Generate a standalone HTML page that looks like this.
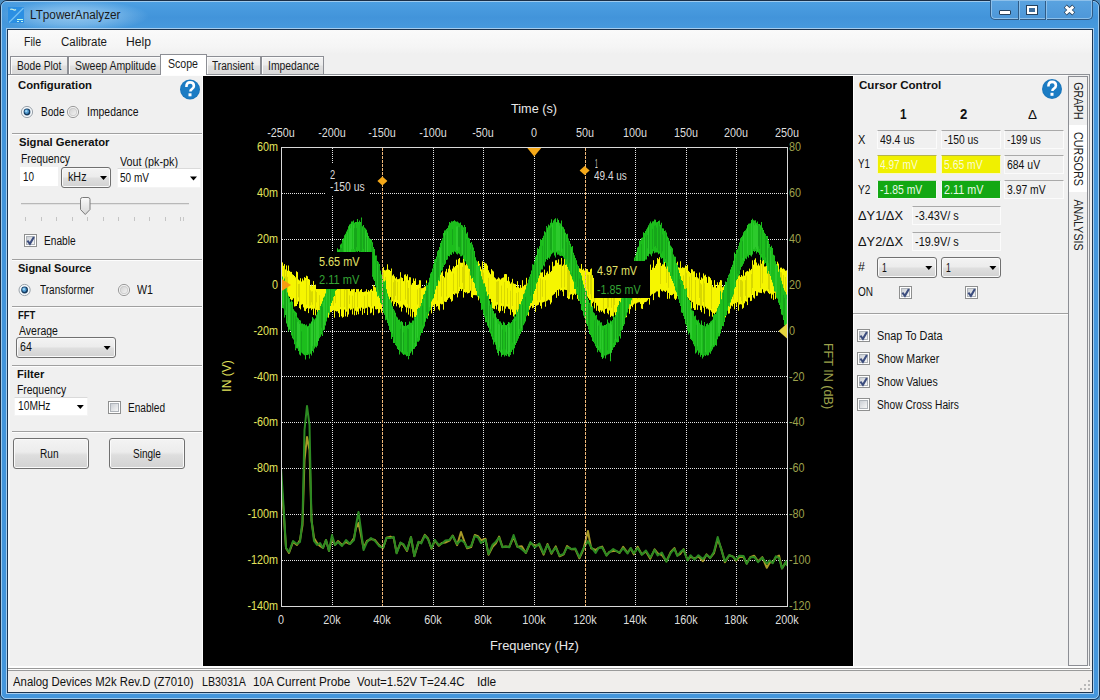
<!DOCTYPE html>
<html><head><meta charset="utf-8"><title>LTpowerAnalyzer</title><style>
*{margin:0;padding:0;box-sizing:border-box}
html,body{width:1100px;height:700px;overflow:hidden}
body{position:relative;background:#fff;font-family:"Liberation Sans",sans-serif;font-size:11px;color:#000}
.t{position:absolute;white-space:nowrap}
.r{position:absolute}
svg{position:absolute;left:0;top:0}
</style></head><body>
<div class="r" style="left:0px;top:0px;width:1100px;height:700px;background:#4a8cc0;"></div>
<div class="r" style="left:0px;top:0px;width:1100px;height:700px;background:#4496dc;border:1px solid #1a2f48;border-radius:7px 7px 6px 6px;"></div>
<div class="r" style="left:1px;top:1px;width:1098px;height:698px;border:1px solid #9fcbee;border-radius:6px 6px 5px 5px;"></div>
<div class="r" style="left:2px;top:2px;width:1096px;height:26px;background:linear-gradient(#4c9fe2,#4294da 60%,#4699dd);border-radius:5px 5px 0 0;"></div>
<div class="r" style="left:2px;top:2px;width:150px;height:26px;border-radius:5px 0 0 0;background:radial-gradient(ellipse 75px 16px at 72px 14px,rgba(200,232,252,0.6),rgba(200,232,252,0.35) 55%,rgba(200,232,252,0));"></div>
<div class="r" style="left:6px;top:28px;width:1088px;height:666px;border:1px solid #a6cdee;"></div>
<div class="r" style="left:7px;top:29px;width:1086px;height:664px;border:1px solid #1d3550;"></div>
<div class="r" style="left:8px;top:30px;width:1084px;height:662px;background:#f0f0f0;"></div>
<svg width="1100" height="30" style="left:0;top:0">
<rect x="8" y="7" width="16" height="16" fill="#2b8fe3"/>
<line x1="9" y1="22.5" x2="23.5" y2="8" stroke="#78c2f4" stroke-width="1.2"/>
<path d="M10.2 9.6 q1.4 -1.1 2.9 0 t2.9 0" stroke="#c8f0e0" fill="none" stroke-width="1.3"/>
<rect x="17" y="19" width="6" height="1" fill="#c0ffe0" shape-rendering="crispEdges"/>
<rect x="17" y="21" width="2" height="1" fill="#c0f8f0" shape-rendering="crispEdges"/>
<rect x="21" y="21" width="2" height="1" fill="#c0f8f0" shape-rendering="crispEdges"/>
</svg>
<div class="t" style="left:29.50px;top:9.0px;font-size:12px;line-height:12px;color:#1a1a1a;transform-origin:0 0;transform:scaleX(0.9785);">LTpowerAnalyzer</div>
<div class="r" style="left:990px;top:0px;width:103px;height:20px;border:1px solid #2f5b86;border-top:none;border-radius:0 0 5px 5px;background:linear-gradient(#5aa3e0,#4d97d8);box-shadow:inset 0 0 0 1px #8dc0ea;"></div>
<div class="r" style="left:1018px;top:1px;width:1px;height:19px;background:#2f5b86;"></div>
<div class="r" style="left:1019px;top:1px;width:1px;height:19px;background:#8dc0ea;"></div>
<div class="r" style="left:1045px;top:1px;width:1px;height:19px;background:#2f5b86;"></div>
<div class="r" style="left:1046px;top:1px;width:1px;height:19px;background:#8dc0ea;"></div>
<div class="r" style="left:999px;top:10px;width:12px;height:5px;background:#fff;border:1px solid #27425e;border-radius:1px;"></div>
<div class="r" style="left:1026px;top:5px;width:12px;height:10px;background:#3f6a90;border:1px solid #27425e;box-shadow:inset 0 0 0 2px #fff;"></div>
<div class="r" style="left:1029px;top:8px;width:6px;height:4px;background:#3d6d9c;"></div>
<svg width="1100" height="30" style="left:0;top:0">
<path d="M1065.3 6.2 L1073.7 13.8 M1073.7 6.2 L1065.3 13.8" stroke="#2a4460" stroke-width="4.4" stroke-linecap="butt"/>
<path d="M1065.7 6.6 L1073.3 13.4 M1073.3 6.6 L1065.7 13.4" stroke="#ffffff" stroke-width="2.8" stroke-linecap="butt"/>
</svg>
<div class="r" style="left:8px;top:30px;width:1084px;height:24px;background:linear-gradient(#fafafa,#f5f5f5 70%,#f0f0f0);"></div>
<div class="t" style="left:24.00px;top:36.0px;font-size:12px;line-height:12px;color:#1a1a1a;transform-origin:0 0;transform:scaleX(0.8794);">File</div>
<div class="t" style="left:61.00px;top:36.0px;font-size:12px;line-height:12px;color:#1a1a1a;transform-origin:0 0;transform:scaleX(0.9579);">Calibrate</div>
<div class="t" style="left:126.00px;top:36.0px;font-size:12px;line-height:12px;color:#1a1a1a;transform-origin:0 0;transform:scaleX(1.0128);">Help</div>
<div class="r" style="left:8px;top:74px;width:1082px;height:1px;background:#8e9196;"></div>
<div class="r" style="left:10px;top:56px;width:58px;height:18px;background:linear-gradient(#f3f3f3,#ececec 45%,#e0e0e0 55%,#d8d8d8);border:1px solid #8c8e94;border-bottom:none;box-shadow:inset 1px 1px 0 #fbfbfb;"></div>
<div class="t" style="left:16.70px;top:60.0px;font-size:12px;line-height:12px;color:#1a1a1a;transform-origin:0 0;transform:scaleX(0.8533);">Bode Plot</div>
<div class="r" style="left:68px;top:56px;width:94px;height:18px;background:linear-gradient(#f3f3f3,#ececec 45%,#e0e0e0 55%,#d8d8d8);border:1px solid #8c8e94;border-bottom:none;box-shadow:inset 1px 1px 0 #fbfbfb;"></div>
<div class="t" style="left:74.50px;top:60.0px;font-size:12px;line-height:12px;color:#1a1a1a;transform-origin:0 0;transform:scaleX(0.8736);">Sweep Amplitude</div>
<div class="r" style="left:206px;top:56px;width:55px;height:18px;background:linear-gradient(#f3f3f3,#ececec 45%,#e0e0e0 55%,#d8d8d8);border:1px solid #8c8e94;border-bottom:none;box-shadow:inset 1px 1px 0 #fbfbfb;"></div>
<div class="t" style="left:212.20px;top:60.0px;font-size:12px;line-height:12px;color:#1a1a1a;transform-origin:0 0;transform:scaleX(0.8432);">Transient</div>
<div class="r" style="left:261px;top:56px;width:63px;height:18px;background:linear-gradient(#f3f3f3,#ececec 45%,#e0e0e0 55%,#d8d8d8);border:1px solid #8c8e94;border-bottom:none;box-shadow:inset 1px 1px 0 #fbfbfb;"></div>
<div class="t" style="left:267.50px;top:60.0px;font-size:12px;line-height:12px;color:#1a1a1a;transform-origin:0 0;transform:scaleX(0.8657);">Impedance</div>
<div class="r" style="left:160px;top:54px;width:47px;height:21px;background:#fff;border:1px solid #8c8e94;border-bottom:none;"></div>
<div class="t" style="left:168.20px;top:58.0px;font-size:12px;line-height:12px;color:#1a1a1a;transform-origin:0 0;transform:scaleX(0.8818);">Scope</div>
<div class="r" style="left:8px;top:75px;width:195px;height:592px;background:#f0f0f0;border-left:2px solid #fafafa;border-top:1px solid #fdfdfd;"></div>
<div class="r" style="left:202px;top:75px;width:1px;height:592px;background:#fcfcfc;"></div>
<div class="t" style="left:17.50px;top:80.0px;font-size:11.5px;line-height:11.5px;color:#111;transform-origin:0 0;transform:scaleX(0.9818);font-weight:bold;">Configuration</div>
<svg width="1100" height="700" style="left:0;top:0;pointer-events:none">
<circle cx="190" cy="89.5" r="10" fill="#1a76bb"/>
<circle cx="190" cy="89.5" r="9" fill="#1b7cc4"/>
<path d="M186.4 87.0 q0 -4.6 3.7 -4.6 q3.8 0 3.8 3.6 q0 2 -2 3.1 q-1.5 .9 -1.5 2.4" stroke="#fff" stroke-width="2.6" fill="none"/>
<rect x="188.5" y="93.3" width="3" height="3" fill="#fff"/>
</svg>
<svg width="1100" height="700" style="left:0;top:0">
<circle cx="27" cy="112" r="5.6" fill="#f4f8fb" stroke="#9aa2aa" stroke-width="1"/>
<circle cx="27" cy="112" r="3.4" fill="#163a5e"/>
<circle cx="26.7" cy="111.6" r="2.3" fill="#4f9ad0"/>
<circle cx="26.3" cy="111.1" r="1.2" fill="#9fd4f4"/>
</svg>
<div class="t" style="left:40.50px;top:106.0px;font-size:12px;line-height:12px;color:#111;transform-origin:0 0;transform:scaleX(0.8387);">Bode</div>
<svg width="1100" height="700" style="left:0;top:0">
<circle cx="73" cy="112" r="5.6" fill="#f6f6f6" stroke="#9a9a9a" stroke-width="1"/>
<circle cx="73" cy="112" r="3.8" fill="url(#rg0)" stroke="#c4c4c4" stroke-width="0.8"/>
<defs><linearGradient id="rg0" x1="0" y1="0" x2="1" y2="1"><stop offset="0" stop-color="#cfcfcf"/><stop offset="1" stop-color="#f6f6f6"/></linearGradient></defs>
</svg>
<div class="t" style="left:86.50px;top:106.0px;font-size:12px;line-height:12px;color:#111;transform-origin:0 0;transform:scaleX(0.8674);">Impedance</div>
<div class="r" style="left:12px;top:133px;width:190px;height:1px;background:#a0a0a0;"></div>
<div class="r" style="left:12px;top:134px;width:190px;height:1px;background:#fdfdfd;"></div>
<div class="t" style="left:18.50px;top:137.0px;font-size:11.5px;line-height:11.5px;color:#111;transform-origin:0 0;transform:scaleX(0.9766);font-weight:bold;">Signal Generator</div>
<div class="t" style="left:20.50px;top:153.0px;font-size:12px;line-height:12px;color:#111;transform-origin:0 0;transform:scaleX(0.8642);">Frequency</div>
<div class="r" style="left:20px;top:167px;width:38px;height:19px;background:#fff;"></div>
<div class="t" style="left:23.00px;top:171.0px;font-size:12px;line-height:12px;color:#111;transform-origin:0 0;transform:scaleX(0.8243);">10</div>
<div class="r" style="left:61px;top:167px;width:50px;height:21px;background:linear-gradient(#f3f3f3,#ececec 45%,#dedede 55%,#d2d2d2);border:1px solid #707070;border-radius:3px;box-shadow:inset 0 0 0 1px #fafafa;"></div>
<div class="t" style="left:67.50px;top:171.0px;font-size:12px;line-height:12px;color:#111;transform-origin:0 0;transform:scaleX(0.8953);">kHz</div>
<svg width="1100" height="700" style="left:0;top:0"><path d="M100 176.0 h7 l-3.5 4 z" fill="#000"/></svg>
<div class="t" style="left:120.00px;top:156.0px;font-size:12px;line-height:12px;color:#111;transform-origin:0 0;transform:scaleX(0.8966);">Vout (pk-pk)</div>
<div class="r" style="left:117px;top:168px;width:84px;height:20px;background:#fff;border:1px solid #f4f4f4;border-top-color:#dadada;"></div>
<div class="t" style="left:120.00px;top:172.0px;font-size:12px;line-height:12px;color:#111;transform-origin:0 0;transform:scaleX(0.8362);">50 mV</div>
<svg width="1100" height="700" style="left:0;top:0"><path d="M190 176.5 h7 l-3.5 4 z" fill="#000"/></svg>
<div class="r" style="left:21px;top:203px;width:168px;height:2px;background:#e2e2e2;border-top:1px solid #b8b8b8;"></div>
<svg width="1100" height="700" style="left:0;top:0">
<path d="M80.5 199.5 q0 -2 2 -2 h5.5 q2 0 2 2 v10 l-4.75 5 l-4.75 -5 z" fill="url(#thg)" stroke="#7a7a7a" stroke-width="1"/>
<defs><linearGradient id="thg" x1="0" x2="0" y1="0" y2="1"><stop offset="0" stop-color="#fafafa"/><stop offset="1" stop-color="#d6d6d6"/></linearGradient></defs>
</svg>
<div class="r" style="left:25px;top:217px;width:1px;height:4px;background:#c4c4c4;"></div>
<div class="r" style="left:41px;top:217px;width:1px;height:4px;background:#c4c4c4;"></div>
<div class="r" style="left:56px;top:217px;width:1px;height:4px;background:#c4c4c4;"></div>
<div class="r" style="left:72px;top:217px;width:1px;height:4px;background:#c4c4c4;"></div>
<div class="r" style="left:87px;top:217px;width:1px;height:4px;background:#c4c4c4;"></div>
<div class="r" style="left:103px;top:217px;width:1px;height:4px;background:#c4c4c4;"></div>
<div class="r" style="left:118px;top:217px;width:1px;height:4px;background:#c4c4c4;"></div>
<div class="r" style="left:134px;top:217px;width:1px;height:4px;background:#c4c4c4;"></div>
<div class="r" style="left:149px;top:217px;width:1px;height:4px;background:#c4c4c4;"></div>
<div class="r" style="left:165px;top:217px;width:1px;height:4px;background:#c4c4c4;"></div>
<div class="r" style="left:180px;top:217px;width:1px;height:4px;background:#c4c4c4;"></div>
<div class="r" style="left:183px;top:217px;width:1px;height:4px;background:#c8c8c8;"></div>
<div class="r" style="left:24px;top:234px;width:13px;height:13px;background:#fff;border:1px solid #8e8f8f;"></div>
<div class="r" style="left:26px;top:236px;width:9px;height:9px;background:linear-gradient(135deg,#cbcfd5,#f6f6f6);border:1px solid #aeb3b9;"></div>
<svg width="1100" height="700" style="left:0;top:0">
<path d="M27.4 240.6 L29.9 243.8 L33.9 237" stroke="#3c4d7e" stroke-width="2.1" fill="none"/>
</svg>
<div class="t" style="left:43.70px;top:235.0px;font-size:12px;line-height:12px;color:#111;transform-origin:0 0;transform:scaleX(0.8456);">Enable</div>
<div class="r" style="left:12px;top:259px;width:190px;height:1px;background:#a0a0a0;"></div>
<div class="r" style="left:12px;top:260px;width:190px;height:1px;background:#fdfdfd;"></div>
<div class="t" style="left:18.00px;top:263.0px;font-size:11.5px;line-height:11.5px;color:#111;transform-origin:0 0;transform:scaleX(0.9572);font-weight:bold;">Signal Source</div>
<svg width="1100" height="700" style="left:0;top:0">
<circle cx="24.6" cy="290" r="5.6" fill="#f4f8fb" stroke="#9aa2aa" stroke-width="1"/>
<circle cx="24.6" cy="290" r="3.4" fill="#163a5e"/>
<circle cx="24.3" cy="289.6" r="2.3" fill="#4f9ad0"/>
<circle cx="23.900000000000002" cy="289.1" r="1.2" fill="#9fd4f4"/>
</svg>
<div class="t" style="left:39.50px;top:284.0px;font-size:12px;line-height:12px;color:#111;transform-origin:0 0;transform:scaleX(0.8352);">Transformer</div>
<svg width="1100" height="700" style="left:0;top:0">
<circle cx="124" cy="290" r="5.6" fill="#f6f6f6" stroke="#9a9a9a" stroke-width="1"/>
<circle cx="124" cy="290" r="3.8" fill="url(#rg0)" stroke="#c4c4c4" stroke-width="0.8"/>
<defs><linearGradient id="rg0" x1="0" y1="0" x2="1" y2="1"><stop offset="0" stop-color="#cfcfcf"/><stop offset="1" stop-color="#f6f6f6"/></linearGradient></defs>
</svg>
<div class="t" style="left:137.20px;top:284.0px;font-size:12px;line-height:12px;color:#111;transform-origin:0 0;transform:scaleX(0.8889);">W1</div>
<div class="r" style="left:12px;top:306px;width:190px;height:1px;background:#a0a0a0;"></div>
<div class="r" style="left:12px;top:307px;width:190px;height:1px;background:#fdfdfd;"></div>
<div class="t" style="left:17.70px;top:310.0px;font-size:11.5px;line-height:11.5px;color:#111;transform-origin:0 0;transform:scaleX(0.8207);font-weight:bold;">FFT</div>
<div class="t" style="left:19.20px;top:325.0px;font-size:12px;line-height:12px;color:#111;transform-origin:0 0;transform:scaleX(0.8745);">Average</div>
<div class="r" style="left:16px;top:337px;width:100px;height:21px;background:linear-gradient(#f3f3f3,#ececec 45%,#dedede 55%,#d2d2d2);border:1px solid #707070;border-radius:3px;box-shadow:inset 0 0 0 1px #fafafa;"></div>
<div class="t" style="left:20.00px;top:341.0px;font-size:12px;line-height:12px;color:#111;transform-origin:0 0;transform:scaleX(0.8843);">64</div>
<svg width="1100" height="700" style="left:0;top:0"><path d="M103.6 346.0 h7 l-3.5 4 z" fill="#000"/></svg>
<div class="r" style="left:12px;top:365px;width:190px;height:1px;background:#a0a0a0;"></div>
<div class="r" style="left:12px;top:366px;width:190px;height:1px;background:#fdfdfd;"></div>
<div class="t" style="left:17.40px;top:369.0px;font-size:11.5px;line-height:11.5px;color:#111;transform-origin:0 0;transform:scaleX(0.9709);font-weight:bold;">Filter</div>
<div class="t" style="left:17.40px;top:384.0px;font-size:12px;line-height:12px;color:#111;transform-origin:0 0;transform:scaleX(0.8660);">Frequency</div>
<div class="r" style="left:14px;top:397px;width:74px;height:19px;background:#fff;border:1px solid #f4f4f4;border-top-color:#dadada;"></div>
<div class="t" style="left:17.90px;top:400.0px;font-size:12px;line-height:12px;color:#111;transform-origin:0 0;transform:scaleX(0.8549);">10MHz</div>
<svg width="1100" height="700" style="left:0;top:0"><path d="M76.8 405.0 h7 l-3.5 4 z" fill="#000"/></svg>
<div class="r" style="left:108px;top:401px;width:13px;height:13px;background:#fff;border:1px solid #8e8f8f;"></div>
<div class="r" style="left:110px;top:403px;width:9px;height:9px;background:linear-gradient(135deg,#cbcfd5,#f6f6f6);border:1px solid #aeb3b9;"></div>
<div class="t" style="left:127.60px;top:402.0px;font-size:12px;line-height:12px;color:#111;transform-origin:0 0;transform:scaleX(0.8424);">Enabled</div>
<div class="r" style="left:12px;top:431px;width:190px;height:1px;background:#a0a0a0;"></div>
<div class="r" style="left:12px;top:432px;width:190px;height:1px;background:#fdfdfd;"></div>
<div class="r" style="left:13px;top:438px;width:76px;height:31px;background:linear-gradient(#f3f3f3,#ececec 45%,#dedede 55%,#d2d2d2);border:1px solid #707070;border-radius:3px;box-shadow:inset 0 0 0 1px #fafafa;"></div>
<div class="t" style="left:40.40px;top:448.0px;font-size:12px;line-height:12px;color:#111;transform-origin:0 0;transform:scaleX(0.8451);">Run</div>
<div class="r" style="left:109px;top:438px;width:76px;height:31px;background:linear-gradient(#f3f3f3,#ececec 45%,#dedede 55%,#d2d2d2);border:1px solid #707070;border-radius:3px;box-shadow:inset 0 0 0 1px #fafafa;"></div>
<div class="t" style="left:132.50px;top:448.0px;font-size:12px;line-height:12px;color:#111;transform-origin:0 0;transform:scaleX(0.8363);">Single</div>
<div class="r" style="left:203px;top:75px;width:650px;height:1px;background:#fdfdfd;"></div>
<div class="r" style="left:203px;top:76px;width:650px;height:590px;background:#000;"></div>
<svg width="1100" height="700" style="left:0;top:0">
<defs><clipPath id="pc"><rect x="282" y="148" width="505" height="458"/></clipPath></defs>
<path d="M282 193.5 H787 M332.5 148 V606 M282 239.5 H787 M382.5 148 V606 M282 285.5 H787 M433.5 148 V606 M282 331.5 H787 M483.5 148 V606 M282 376.5 H787 M534.5 148 V606 M282 422.5 H787 M585.5 148 V606 M282 468.5 H787 M635.5 148 V606 M282 514.5 H787 M686.5 148 V606 M282 560.5 H787 M736.5 148 V606" stroke="#e6e6e6" stroke-width="1" stroke-dasharray="1 1" shape-rendering="crispEdges"/>
<g clip-path="url(#pc)">
<path d="M282.5 262.4V293.6M283.5 265.8V294.4M284.5 264.1V292.0M285.5 269.4V292.2M286.5 265.4V301.2M287.5 270.7V299.7M288.5 265.5V297.0M289.5 270.9V296.8M290.5 271.8V299.2M291.5 271.9V300.2M292.5 274.3V299.8M293.5 275.0V298.3M294.5 276.0V306.5M295.5 277.3V306.2M296.5 271.3V306.0M297.5 272.1V304.0M298.5 279.5V301.5M299.5 280.4V308.1M300.5 278.2V309.4M301.5 281.5V304.7M302.5 278.5V304.2M303.5 280.4V307.4M304.5 277.1V310.8M305.5 277.9V311.2M306.5 275.7V308.8M307.5 276.3V308.0M308.5 279.0V313.1M309.5 279.6V308.6M310.5 286.0V308.3M311.5 284.6V310.2M312.5 286.1V308.9M313.5 281.1V315.0M314.5 285.3V308.6M315.5 284.7V315.4M316.5 286.0V309.9M317.5 287.4V312.6M318.5 280.2V312.0M319.5 287.7V316.2M320.5 280.5V311.3M321.5 285.6V319.0M322.5 289.0V310.8M323.5 282.6V317.1M324.5 282.2V319.2M325.5 287.8V312.7M326.5 287.8V314.3M327.5 283.7V313.6M328.5 288.0V317.7M329.5 286.3V313.1M330.5 289.0V312.2M331.5 288.1V312.1M332.5 289.9V310.3M333.5 282.6V310.4M334.5 283.6V317.7M335.5 287.0V310.9M336.5 281.7V311.5M337.5 287.2V311.3M338.5 283.7V313.2M339.5 286.8V317.1M340.5 281.9V309.3M341.5 288.0V316.3M342.5 288.1V317.7M343.5 287.5V316.9M344.5 282.4V309.6M345.5 289.1V316.4M346.5 285.0V311.7M347.5 284.5V316.8M348.5 285.5V314.5M349.5 288.4V308.6M350.5 291.1V310.2M351.5 289.2V309.3M352.5 289.3V314.5M353.5 285.7V308.5M354.5 285.4V315.3M355.5 292.1V310.8M356.5 285.2V314.9M357.5 289.2V311.6M358.5 286.4V314.3M359.5 291.5V308.6M360.5 289.9V310.8M361.5 288.9V307.7M362.5 292.0V314.8M363.5 292.1V308.8M364.5 291.7V313.1M365.5 291.3V308.4M366.5 289.2V307.9M367.5 291.9V315.0M368.5 290.1V306.8M369.5 291.3V307.5M370.5 289.8V313.3M371.5 285.9V312.6M372.5 290.8V308.5M373.5 285.1V315.2M374.5 286.5V306.3M375.5 287.3V309.2M376.5 286.4V309.5M377.5 293.7V309.0M378.5 290.3V313.3M379.5 287.9V312.7M380.5 286.1V309.2M381.5 294.1V312.7M382.5 268.4V295.3M383.5 267.2V296.1M384.5 270.1V294.0M385.5 270.4V294.8M386.5 269.7V300.3M387.5 264.3V301.7M388.5 269.5V298.3M389.5 270.0V302.9M390.5 271.0V297.2M391.5 268.5V305.1M392.5 275.5V301.3M393.5 274.4V306.1M394.5 276.3V303.9M395.5 278.4V302.0M396.5 277.1V306.3M397.5 279.2V303.0M398.5 279.1V304.5M399.5 278.6V307.6M400.5 272.2V306.7M401.5 277.4V311.6M402.5 278.0V308.0M403.5 281.1V304.7M404.5 274.7V305.7M405.5 274.3V307.2M406.5 276.2V312.5M407.5 274.4V307.7M408.5 280.2V314.6M409.5 277.2V308.3M410.5 277.3V316.5M411.5 284.7V309.2M412.5 283.1V317.6M413.5 278.4V311.9M414.5 280.9V316.9M415.5 278.5V317.4M416.5 285.5V318.2M417.5 284.9V311.5M418.5 284.5V317.5M419.5 280.2V314.1M420.5 280.3V318.3M421.5 288.2V318.1M422.5 288.1V314.2M423.5 287.7V319.4M424.5 286.7V313.3M425.5 286.2V316.7M426.5 280.4V317.2M427.5 285.5V311.9M428.5 283.1V315.6M429.5 283.6V309.0M430.5 281.4V310.1M431.5 281.5V313.4M432.5 279.4V306.9M433.5 274.4V305.5M434.5 274.3V310.8M435.5 280.3V304.1M436.5 271.8V306.7M437.5 276.6V306.1M438.5 276.2V309.4M439.5 272.2V310.5M440.5 272.7V303.8M441.5 272.5V304.4M442.5 271.2V304.2M443.5 276.0V309.7M444.5 277.4V301.6M445.5 271.5V302.0M446.5 268.9V301.8M447.5 272.4V299.8M448.5 268.7V298.2M449.5 265.3V297.5M450.5 269.7V299.2M451.5 271.4V301.7M452.5 268.6V300.8M453.5 266.2V294.0M454.5 267.3V294.9M455.5 266.0V293.5M456.5 259.7V293.6M457.5 264.8V297.4M458.5 259.2V293.3M459.5 258.0V291.1M460.5 262.6V289.0M461.5 262.8V291.0M462.5 262.7V289.3M463.5 257.5V297.6M464.5 259.5V292.0M465.5 265.2V292.8M466.5 259.1V292.2M467.5 265.2V293.5M468.5 264.7V293.1M469.5 264.9V292.7M470.5 264.7V290.8M471.5 265.3V297.1M472.5 267.9V298.0M473.5 262.6V295.2M474.5 261.1V295.1M475.5 265.7V295.2M476.5 268.5V295.3M477.5 268.2V292.8M478.5 261.0V300.3M479.5 263.7V296.8M480.5 266.5V300.8M481.5 269.3V299.9M482.5 261.4V294.2M483.5 269.2V296.3M484.5 262.3V294.1M485.5 263.3V294.8M486.5 263.6V297.7M487.5 265.5V303.5M488.5 270.3V298.7M489.5 272.5V299.0M490.5 274.2V298.9M491.5 269.1V302.4M492.5 270.5V308.4M493.5 271.4V308.6M494.5 277.3V309.1M495.5 278.3V305.8M496.5 279.5V309.3M497.5 278.8V304.7M498.5 277.4V310.9M499.5 278.4V312.8M500.5 279.5V311.2M501.5 278.4V305.9M502.5 277.8V310.8M503.5 277.4V306.4M504.5 274.2V313.2M505.5 274.0V308.7M506.5 274.2V306.5M507.5 280.8V306.6M508.5 276.9V308.7M509.5 281.3V309.2M510.5 283.6V314.9M511.5 282.3V309.5M512.5 278.8V312.2M513.5 283.4V316.5M514.5 283.9V316.8M515.5 284.1V314.3M516.5 287.2V313.3M517.5 281.1V318.5M518.5 286.4V313.6M519.5 288.1V313.2M520.5 285.4V311.9M521.5 287.7V312.7M522.5 280.2V318.3M523.5 286.2V318.0M524.5 284.9V310.5M525.5 284.7V313.6M526.5 277.8V311.1M527.5 283.6V309.2M528.5 284.6V315.9M529.5 280.6V309.7M530.5 276.1V307.6M531.5 276.0V305.9M532.5 273.6V308.2M533.5 279.2V307.5M534.5 279.3V304.5M535.5 272.6V311.8M536.5 276.9V305.8M537.5 273.5V305.3M538.5 277.8V304.8M539.5 275.3V302.4M540.5 270.5V305.9M541.5 272.6V308.6M542.5 272.2V302.5M543.5 276.9V302.1M544.5 269.6V301.7M545.5 275.2V306.7M546.5 272.8V301.2M547.5 271.4V300.5M548.5 273.8V299.7M549.5 265.5V300.3M550.5 272.1V304.3M551.5 270.9V302.5M552.5 261.8V295.5M553.5 266.3V294.7M554.5 265.7V293.9M555.5 260.3V292.2M556.5 260.2V297.9M557.5 262.8V290.1M558.5 259.4V295.8M559.5 264.7V289.4M560.5 264.5V290.6M561.5 258.0V290.0M562.5 265.8V291.6M563.5 264.5V296.1M564.5 259.1V289.7M565.5 258.2V289.9M566.5 259.6V290.1M567.5 264.7V298.0M568.5 259.3V299.2M569.5 259.5V298.8M570.5 267.4V294.6M571.5 266.1V294.2M572.5 264.6V299.5M573.5 261.9V295.1M574.5 265.3V293.8M575.5 265.9V294.9M576.5 267.2V293.4M577.5 268.0V298.9M578.5 269.2V300.7M579.5 268.3V300.2M580.5 268.7V293.4M581.5 264.0V300.3M582.5 269.7V301.6M583.5 268.7V302.0M584.5 270.5V300.1M585.5 268.2V294.7M586.5 268.9V303.3M587.5 269.1V296.7M588.5 271.7V298.3M589.5 272.0V299.9M590.5 269.3V300.9M591.5 268.5V306.9M592.5 275.2V303.2M593.5 277.9V301.8M594.5 272.7V308.4M595.5 277.3V302.9M596.5 271.2V310.8M597.5 279.2V305.7M598.5 274.7V310.9M599.5 280.3V312.3M600.5 281.0V310.4M601.5 279.8V311.9M602.5 274.3V310.7M603.5 274.9V312.6M604.5 273.2V313.8M605.5 279.0V309.1M606.5 281.5V308.6M607.5 282.1V313.2M608.5 275.5V314.4M609.5 278.3V310.5M610.5 276.5V317.1M611.5 278.6V315.8M612.5 286.3V316.4M613.5 278.9V319.0M614.5 281.5V312.4M615.5 280.2V317.5M616.5 285.0V317.5M617.5 285.5V319.2M618.5 286.8V317.7M619.5 287.4V319.9M620.5 287.8V315.3M621.5 287.6V317.7M622.5 284.5V312.4M623.5 283.9V311.1M624.5 278.8V310.9M625.5 284.4V311.2M626.5 279.4V317.2M627.5 279.0V309.7M628.5 280.7V308.5M629.5 280.7V313.8M630.5 275.2V309.2M631.5 279.8V305.9M632.5 281.3V307.2M633.5 280.2V304.7M634.5 272.9V303.7M635.5 278.1V310.2M636.5 273.1V303.4M637.5 278.5V302.7M638.5 276.2V302.4M639.5 271.4V302.2M640.5 271.2V303.9M641.5 272.4V308.6M642.5 271.7V309.0M643.5 276.2V304.1M644.5 275.4V302.4M645.5 269.8V302.0M646.5 268.6V301.7M647.5 271.8V300.5M648.5 267.5V298.9M649.5 269.1V304.6M650.5 264.6V295.9M651.5 269.9V294.7M652.5 267.6V293.9M653.5 260.2V300.1M654.5 267.9V293.3M655.5 265.7V292.5M656.5 263.9V291.5M657.5 258.0V291.4M658.5 259.2V296.8M659.5 257.2V297.5M660.5 262.8V289.4M661.5 265.8V290.9M662.5 264.3V291.6M663.5 263.7V290.6M664.5 259.4V291.3M665.5 266.6V292.0M666.5 264.4V290.7M667.5 265.3V298.9M668.5 267.5V292.9M669.5 264.6V298.7M670.5 268.1V295.0M671.5 265.7V295.4M672.5 267.1V294.9M673.5 266.1V293.9M674.5 266.9V298.7M675.5 263.2V300.0M676.5 268.9V298.7M677.5 261.7V296.1M678.5 267.3V295.4M679.5 267.7V296.0M680.5 261.3V295.8M681.5 268.1V296.1M682.5 267.2V301.9M683.5 267.7V300.8M684.5 267.7V296.7M685.5 265.5V297.4M686.5 266.5V298.2M687.5 264.9V303.7M688.5 270.9V298.4M689.5 272.0V300.1M690.5 273.1V300.7M691.5 269.1V308.6M692.5 269.5V302.2M693.5 271.4V308.1M694.5 271.3V310.0M695.5 277.1V309.9M696.5 273.2V304.3M697.5 277.3V309.8M698.5 278.4V305.3M699.5 272.5V305.5M700.5 279.9V310.2M701.5 277.4V312.2M702.5 278.5V305.8M703.5 273.4V307.7M704.5 275.6V313.7M705.5 274.7V306.8M706.5 277.1V308.7M707.5 282.9V308.5M708.5 276.5V309.5M709.5 276.9V316.3M710.5 278.2V310.3M711.5 280.2V311.8M712.5 285.6V316.7M713.5 287.2V313.2M714.5 280.1V319.3M715.5 284.8V312.7M716.5 287.7V318.2M717.5 282.3V318.1M718.5 284.9V318.9M719.5 282.2V320.4M720.5 280.1V313.0M721.5 280.3V319.7M722.5 287.3V313.5M723.5 286.4V316.6M724.5 286.2V317.9M725.5 283.2V317.4M726.5 283.4V308.9M727.5 283.8V307.9M728.5 281.8V313.7M729.5 275.1V313.4M730.5 276.3V308.7M731.5 273.2V305.6M732.5 273.1V306.4M733.5 279.2V303.9M734.5 277.5V309.3M735.5 279.5V303.2M736.5 277.8V306.1M737.5 276.3V302.3M738.5 276.2V310.7M739.5 275.3V304.5M740.5 276.9V304.2M741.5 275.0V304.5M742.5 276.3V308.8M743.5 270.2V307.8M744.5 275.6V303.3M745.5 272.3V301.3M746.5 271.5V301.7M747.5 270.9V305.1M748.5 271.5V297.7M749.5 268.6V297.6M750.5 270.2V301.1M751.5 268.9V300.8M752.5 260.3V295.0M753.5 264.7V297.6M754.5 259.8V298.6M755.5 258.3V291.2M756.5 262.5V295.9M757.5 265.4V295.7M758.5 263.6V292.4M759.5 265.5V292.7M760.5 257.4V292.9M761.5 263.7V293.1M762.5 260.2V289.3M763.5 259.6V292.4M764.5 266.5V293.5M765.5 266.4V291.4M766.5 264.3V290.7M767.5 264.7V291.5M768.5 265.2V293.1M769.5 266.0V294.1M770.5 259.7V293.6M771.5 262.1V298.5M772.5 267.1V294.6M773.5 265.5V299.9M774.5 268.5V292.9M775.5 262.8V299.1M776.5 266.6V293.3M777.5 261.7V294.5M778.5 263.6V300.6M779.5 269.7V300.0M780.5 267.7V295.7M781.5 267.6V294.8M782.5 268.8V297.3M783.5 268.4V300.5M784.5 269.3V296.3M785.5 270.7V303.6M786.5 270.4V296.2" stroke="#f6f600" stroke-width="1" fill="none"/>
<path d="M284.5 267.4V286.3M285.5 276.5V288.4M286.5 270.9V295.4M287.5 276.8V295.1M296.5 277.9V303.3M298.5 284.0V297.3M299.5 283.8V303.2M306.5 279.8V304.6M309.5 284.9V306.4M310.5 290.2V305.3M311.5 291.5V302.3M312.5 291.2V304.8M315.5 290.5V308.0M316.5 292.0V302.4M319.5 295.1V309.3M329.5 293.0V308.1M333.5 285.3V305.7M335.5 294.3V303.1M340.5 285.5V307.0M344.5 289.5V307.2M346.5 288.0V309.4M347.5 289.5V313.7M349.5 295.3V304.0M352.5 295.7V310.9M354.5 290.0V311.7M357.5 291.7V307.2M364.5 295.9V310.5M367.5 294.3V311.4M371.5 291.9V306.4M382.5 270.6V292.7M383.5 272.3V292.9M385.5 276.8V290.1M391.5 271.9V301.5M393.5 282.2V303.3M394.5 279.7V299.5M395.5 280.5V295.8M397.5 281.8V300.1M400.5 275.7V300.9M405.5 280.3V299.6M407.5 282.2V303.9M408.5 288.0V309.6M410.5 279.7V314.1M417.5 289.3V304.6M419.5 288.0V308.4M420.5 286.9V310.8M427.5 288.1V306.9M429.5 290.7V305.2M430.5 284.9V307.2M437.5 280.1V300.5M441.5 276.3V296.6M443.5 278.0V302.3M446.5 272.6V296.7M453.5 273.3V291.3M457.5 267.6V292.8M459.5 263.0V286.9M462.5 266.8V282.8M463.5 262.5V290.1M464.5 262.6V289.0M469.5 271.3V290.4M471.5 271.0V292.5M475.5 268.3V289.3M476.5 274.4V290.0M482.5 268.4V287.7M483.5 272.6V294.1M488.5 277.8V292.9M496.5 281.7V302.2M497.5 281.4V302.1M498.5 281.0V307.2M501.5 285.6V303.3M504.5 281.9V309.5M507.5 288.1V304.4M510.5 290.6V309.0M512.5 282.6V306.0M516.5 293.0V310.6M518.5 292.1V309.2M524.5 290.8V303.9M526.5 283.3V305.8M529.5 284.3V305.3M532.5 280.3V301.3M537.5 277.3V300.5M540.5 278.2V300.0M542.5 279.5V296.8M545.5 280.2V304.4M561.5 261.1V287.8M564.5 264.5V287.4M567.5 267.6V295.9M568.5 266.5V296.5M569.5 261.8V292.2M585.5 273.8V288.6M587.5 274.6V289.3M588.5 274.9V295.2M590.5 275.1V294.2M591.5 270.7V298.9M594.5 275.0V303.0M595.5 282.9V298.5M597.5 287.0V297.8M603.5 281.2V309.5M607.5 288.3V307.9M608.5 279.2V307.4M611.5 282.8V307.8M613.5 285.8V315.0M614.5 286.1V305.0M622.5 289.6V307.8M624.5 286.0V303.2M625.5 292.2V307.8M626.5 282.0V311.0M628.5 283.5V303.5M629.5 286.3V306.7M632.5 285.3V302.6M634.5 277.4V297.9M637.5 284.4V299.1M639.5 275.3V296.3M640.5 276.0V298.7M648.5 271.8V294.3M660.5 265.1V284.0M666.5 268.3V282.9M668.5 271.2V287.8M677.5 264.3V288.7M678.5 274.7V289.9M679.5 275.3V288.9M683.5 275.5V297.0M685.5 268.6V293.7M686.5 272.7V295.6M689.5 276.7V297.3M691.5 274.2V303.3M695.5 279.9V303.6M699.5 275.2V298.0M700.5 283.1V306.4M701.5 284.4V306.7M703.5 280.5V302.1M704.5 283.1V307.2M711.5 284.1V308.9M720.5 285.0V308.4M722.5 290.1V311.4M726.5 285.7V303.5M733.5 283.0V299.3M738.5 279.3V304.6M740.5 280.0V296.9M741.5 280.1V301.0M742.5 281.3V303.2M745.5 280.1V295.9M746.5 275.8V299.7M751.5 274.1V294.0M752.5 265.0V288.0M760.5 261.5V288.1M762.5 263.1V283.3M768.5 269.2V289.2M769.5 270.1V291.3M774.5 273.4V285.5M775.5 269.1V295.8M777.5 268.5V287.2M780.5 272.1V293.4M781.5 272.3V292.8M783.5 275.0V298.0M785.5 277.0V297.0" stroke="#c4c400" stroke-width="0.6" fill="none"/>
<path d="M282.5 276.4V308.1M283.5 280.0V308.5M284.5 278.4V317.5M285.5 285.3V314.9M286.5 287.3V323.5M287.5 292.5V326.8M288.5 295.7V331.4M289.5 298.0V329.7M290.5 301.7V330.7M291.5 300.3V335.5M292.5 301.7V338.2M293.5 309.3V339.6M294.5 310.7V344.2M295.5 311.7V350.2M296.5 312.8V348.2M297.5 317.6V348.4M298.5 318.4V351.0M299.5 320.0V354.5M300.5 320.5V355.4M301.5 323.6V352.4M302.5 323.5V353.5M303.5 324.2V354.4M304.5 324.0V355.3M305.5 325.2V359.6M306.5 324.6V354.9M307.5 326.2V355.1M308.5 325.7V354.5M309.5 323.5V358.5M310.5 323.5V353.7M311.5 321.5V355.5M312.5 317.1V351.1M313.5 318.5V352.5M314.5 319.5V348.5M315.5 318.3V346.8M316.5 314.8V347.4M317.5 311.8V345.7M318.5 310.0V341.0M319.5 310.0V338.2M320.5 306.0V336.7M321.5 303.8V334.5M322.5 301.3V336.0M323.5 297.7V330.3M324.5 296.6V329.8M325.5 293.4V325.4M326.5 287.7V321.5M327.5 286.5V317.6M328.5 282.5V312.8M329.5 280.5V314.7M330.5 276.0V306.1M331.5 271.4V303.0M332.5 271.1V300.8M333.5 264.3V296.9M334.5 260.6V295.9M335.5 261.0V290.7M336.5 255.4V290.0M337.5 248.3V288.7M338.5 249.4V281.2M339.5 249.3V278.8M340.5 244.4V276.9M341.5 243.4V272.1M342.5 239.4V272.9M343.5 238.2V267.7M344.5 235.3V265.8M345.5 233.7V262.8M346.5 231.5V262.8M347.5 229.6V260.7M348.5 226.3V263.3M349.5 224.6V258.1M350.5 223.7V256.2M351.5 221.5V253.5M352.5 221.5V253.6M353.5 220.5V252.5M354.5 222.7V253.5M355.5 222.0V255.0M356.5 222.0V251.6M357.5 218.9V252.0M358.5 222.1V251.1M359.5 220.5V253.2M360.5 222.1V257.1M361.5 217.4V253.5M362.5 226.2V259.5M363.5 225.0V255.9M364.5 227.6V262.0M365.5 228.4V259.5M366.5 229.7V264.3M367.5 232.7V263.5M368.5 236.1V266.9M369.5 238.3V271.3M370.5 239.5V271.4M371.5 239.5V274.3M372.5 242.3V276.8M373.5 247.1V279.6M374.5 249.1V281.0M375.5 255.5V285.8M376.5 255.6V291.7M377.5 260.9V296.5M378.5 262.2V295.7M379.5 264.0V298.0M380.5 270.6V303.1M381.5 274.5V304.6M382.5 276.0V306.9M383.5 281.3V313.1M384.5 281.6V314.8M385.5 280.6V320.3M386.5 289.3V319.8M387.5 293.5V323.0M388.5 296.4V325.8M389.5 299.3V329.9M390.5 299.7V331.9M391.5 302.4V339.0M392.5 306.2V337.1M393.5 308.9V343.0M394.5 310.4V343.0M395.5 312.8V344.9M396.5 316.4V346.3M397.5 317.5V349.0M398.5 319.8V349.9M399.5 319.6V354.4M400.5 321.8V351.4M401.5 321.1V352.4M402.5 322.1V353.8M403.5 325.4V355.1M404.5 325.9V354.5M405.5 321.9V354.8M406.5 325.8V356.2M407.5 325.1V356.0M408.5 324.5V359.2M409.5 321.6V355.9M410.5 322.7V353.3M411.5 322.8V351.6M412.5 320.6V354.8M413.5 320.6V349.1M414.5 317.1V348.8M415.5 317.0V347.0M416.5 315.3V346.0M417.5 309.0V341.7M418.5 307.8V341.8M419.5 307.9V340.5M420.5 306.2V335.6M421.5 303.0V333.1M422.5 299.1V332.9M423.5 294.7V328.6M424.5 294.1V326.5M425.5 290.7V321.8M426.5 282.9V318.3M427.5 285.8V318.9M428.5 282.4V313.7M429.5 277.8V311.2M430.5 273.6V309.8M431.5 271.9V301.5M432.5 268.4V299.6M433.5 263.9V298.3M434.5 259.4V294.1M435.5 259.0V289.5M436.5 256.5V285.9M437.5 251.2V285.7M438.5 250.0V280.3M439.5 247.0V281.3M440.5 243.1V274.8M441.5 240.8V270.6M442.5 238.3V270.7M443.5 233.0V266.9M444.5 230.5V265.0M445.5 230.2V263.7M446.5 229.0V260.0M447.5 227.9V259.5M448.5 225.6V256.1M449.5 222.0V256.4M450.5 222.8V254.5M451.5 221.2V255.1M452.5 221.4V252.2M453.5 221.0V253.8M454.5 220.2V251.4M455.5 221.2V252.2M456.5 221.7V253.7M457.5 221.5V254.4M458.5 222.5V253.2M459.5 223.2V254.2M460.5 222.5V256.3M461.5 225.0V256.2M462.5 225.4V255.4M463.5 227.2V258.9M464.5 225.0V262.4M465.5 227.1V261.3M466.5 233.4V264.0M467.5 232.3V265.3M468.5 237.8V268.6M469.5 238.5V269.0M470.5 242.9V275.6M471.5 242.1V278.7M472.5 244.5V277.9M473.5 247.5V282.0M474.5 250.9V283.3M475.5 257.2V288.1M476.5 260.6V291.1M477.5 261.8V296.7M478.5 266.0V295.9M479.5 265.3V298.5M480.5 271.3V302.9M481.5 276.2V309.9M482.5 279.4V309.5M483.5 283.4V314.5M484.5 283.3V317.2M485.5 286.7V322.2M486.5 291.4V322.3M487.5 295.7V325.8M488.5 294.3V327.7M489.5 300.6V331.8M490.5 304.4V333.4M491.5 302.4V336.4M492.5 308.4V339.6M493.5 311.1V344.5M494.5 313.6V342.3M495.5 313.2V344.8M496.5 317.6V349.5M497.5 319.0V353.0M498.5 319.1V355.6M499.5 321.3V350.9M500.5 321.5V352.5M501.5 323.3V356.7M502.5 325.0V355.1M503.5 321.8V354.8M504.5 322.7V356.4M505.5 324.9V355.2M506.5 325.0V355.9M507.5 323.9V354.3M508.5 321.9V356.4M509.5 322.4V356.7M510.5 323.2V354.9M511.5 322.1V351.9M512.5 319.9V349.8M513.5 318.7V354.3M514.5 314.7V348.2M515.5 316.4V345.0M516.5 309.8V343.0M517.5 311.8V340.7M518.5 309.3V338.5M519.5 304.1V336.1M520.5 304.3V334.0M521.5 301.3V331.7M522.5 298.9V330.4M523.5 294.2V325.2M524.5 293.3V323.6M525.5 289.6V321.4M526.5 285.7V316.2M527.5 283.9V314.9M528.5 279.4V312.3M529.5 276.7V306.1M530.5 274.3V303.2M531.5 270.5V303.0M532.5 264.2V300.4M533.5 264.7V293.9M534.5 261.1V291.1M535.5 256.7V289.0M536.5 255.1V283.4M537.5 247.7V281.9M538.5 249.0V278.3M539.5 246.3V274.7M540.5 239.0V272.5M541.5 239.9V269.6M542.5 238.0V269.4M543.5 235.8V265.4M544.5 231.3V266.4M545.5 232.2V261.8M546.5 226.0V259.1M547.5 227.6V260.1M548.5 224.4V257.7M549.5 225.5V258.7M550.5 222.8V256.5M551.5 219.2V254.3M552.5 222.8V253.3M553.5 220.5V252.4M554.5 219.2V255.5M555.5 218.2V257.6M556.5 222.3V252.6M557.5 218.5V254.8M558.5 219.9V254.5M559.5 222.8V255.6M560.5 223.5V255.9M561.5 220.4V255.8M562.5 226.6V255.9M563.5 227.2V257.4M564.5 229.3V259.0M565.5 232.7V265.1M566.5 234.2V264.5M567.5 233.8V267.1M568.5 238.6V269.4M569.5 240.9V271.0M570.5 243.7V274.4M571.5 246.7V276.3M572.5 246.1V279.5M573.5 252.7V281.6M574.5 255.3V289.1M575.5 258.1V289.0M576.5 260.2V293.5M577.5 264.6V294.9M578.5 266.0V299.3M579.5 271.9V301.0M580.5 272.9V303.9M581.5 275.6V310.1M582.5 280.4V311.1M583.5 284.5V315.6M584.5 288.0V318.0M585.5 289.6V321.7M586.5 290.8V323.7M587.5 297.4V326.1M588.5 300.1V329.5M589.5 302.8V334.0M590.5 299.9V335.0M591.5 306.8V337.2M592.5 306.0V340.9M593.5 312.3V342.1M594.5 313.3V343.5M595.5 315.4V346.2M596.5 314.9V348.0M597.5 319.5V352.3M598.5 320.4V350.2M599.5 320.4V351.7M600.5 322.5V352.7M601.5 322.3V356.9M602.5 325.5V358.9M603.5 325.7V357.7M604.5 324.9V355.4M605.5 324.9V358.5M606.5 323.9V355.3M607.5 319.6V354.4M608.5 322.5V354.3M609.5 323.2V353.8M610.5 320.5V361.3M611.5 321.2V352.7M612.5 319.9V350.1M613.5 315.8V347.4M614.5 317.3V347.0M615.5 314.9V344.9M616.5 311.9V342.3M617.5 306.8V342.4M618.5 304.9V342.0M619.5 301.0V336.3M620.5 302.2V338.4M621.5 298.3V330.6M622.5 296.9V329.8M623.5 293.4V326.1M624.5 286.8V324.2M625.5 287.6V317.8M626.5 285.8V315.8M627.5 278.8V312.6M628.5 275.6V308.1M629.5 273.2V304.3M630.5 271.9V304.5M631.5 269.3V300.3M632.5 265.6V296.9M633.5 261.6V292.2M634.5 257.5V290.9M635.5 255.5V286.1M636.5 252.0V283.8M637.5 247.6V280.0M638.5 246.6V278.6M639.5 240.6V278.0M640.5 240.6V273.7M641.5 238.1V274.5M642.5 237.4V270.4M643.5 232.2V267.6M644.5 233.1V261.7M645.5 231.1V259.5M646.5 229.3V259.6M647.5 227.5V256.1M648.5 225.3V256.5M649.5 223.5V253.7M650.5 221.4V254.4M651.5 223.3V256.3M652.5 221.4V253.6M653.5 221.3V251.2M654.5 219.4V253.2M655.5 219.7V252.5M656.5 222.3V252.6M657.5 222.1V252.5M658.5 221.0V254.2M659.5 220.6V253.6M660.5 224.8V257.3M661.5 222.8V258.7M662.5 228.3V257.9M663.5 228.6V264.4M664.5 231.0V261.9M665.5 230.4V263.0M666.5 232.4V268.8M667.5 236.5V266.6M668.5 237.9V271.7M669.5 240.8V272.2M670.5 245.4V276.1M671.5 246.7V278.7M672.5 248.2V281.0M673.5 254.4V283.2M674.5 256.4V286.3M675.5 256.8V290.5M676.5 262.9V292.3M677.5 265.1V295.8M678.5 269.6V299.3M679.5 272.9V303.1M680.5 276.3V306.1M681.5 280.0V312.5M682.5 281.1V313.1M683.5 285.0V316.0M684.5 288.7V319.1M685.5 289.2V323.9M686.5 288.2V325.5M687.5 296.9V330.7M688.5 299.5V334.5M689.5 300.1V332.8M690.5 302.0V338.9M691.5 309.4V340.1M692.5 310.6V341.2M693.5 311.1V344.2M694.5 316.2V346.2M695.5 315.5V353.6M696.5 319.7V352.6M697.5 320.6V350.5M698.5 319.8V354.8M699.5 322.8V352.8M700.5 324.6V356.7M701.5 320.5V355.1M702.5 325.1V358.5M703.5 325.8V356.7M704.5 321.9V355.3M705.5 326.3V356.1M706.5 324.0V354.8M707.5 323.3V355.4M708.5 324.7V355.2M709.5 323.0V352.6M710.5 321.5V353.7M711.5 320.8V351.2M712.5 319.8V349.5M713.5 315.2V347.3M714.5 314.1V346.4M715.5 314.1V345.1M716.5 311.5V345.8M717.5 307.9V339.3M718.5 306.2V336.5M719.5 303.9V336.2M720.5 291.2V333.6M721.5 299.2V329.3M722.5 292.6V326.1M723.5 289.9V326.2M724.5 286.2V322.0M725.5 281.5V315.9M726.5 282.0V315.2M727.5 277.9V310.7M728.5 274.9V306.0M729.5 273.6V306.7M730.5 269.6V302.4M731.5 266.9V299.2M732.5 264.7V296.8M733.5 260.8V294.4M734.5 252.4V288.4M735.5 254.1V287.0M736.5 249.9V280.3M737.5 249.3V279.1M738.5 246.0V276.0M739.5 242.6V274.6M740.5 238.3V269.7M741.5 237.1V267.1M742.5 235.5V265.7M743.5 232.3V263.7M744.5 231.1V261.2M745.5 230.2V258.6M746.5 228.5V259.2M747.5 225.0V256.6M748.5 223.8V257.7M749.5 223.4V254.9M750.5 223.2V255.4M751.5 220.0V256.6M752.5 218.7V254.5M753.5 220.3V251.0M754.5 220.6V252.0M755.5 220.3V251.0M756.5 222.8V253.5M757.5 221.5V252.0M758.5 224.1V252.8M759.5 224.1V254.7M760.5 225.3V260.0M761.5 222.1V257.5M762.5 227.7V261.2M763.5 230.0V259.7M764.5 232.7V264.3M765.5 234.0V263.0M766.5 236.1V265.9M767.5 236.1V273.4M768.5 240.3V271.1M769.5 244.0V274.0M770.5 247.1V276.1M771.5 245.8V279.8M772.5 247.9V282.6M773.5 254.7V286.3M774.5 255.5V291.6M775.5 261.3V291.6M776.5 264.0V297.8M777.5 265.4V298.8M778.5 271.7V302.7M779.5 269.6V305.0M780.5 277.6V308.9M781.5 280.7V314.6M782.5 284.2V315.2M783.5 288.0V319.9M784.5 290.5V325.2M785.5 291.9V326.0M786.5 294.6V327.4" stroke="#1cbe1c" stroke-width="1.05" fill="none"/>
<path d="M284.5 284.4V316.7M285.5 289.3V310.5M287.5 292.8V320.6M291.5 304.8V332.3M293.5 312.8V337.7M295.5 316.2V348.9M296.5 318.8V341.6M301.5 331.4V352.3M309.5 327.4V357.4M313.5 320.0V350.4M321.5 304.7V327.8M322.5 306.8V333.5M330.5 283.4V301.8M334.5 263.6V289.3M335.5 263.0V289.9M340.5 247.4V274.1M341.5 248.0V271.7M342.5 242.0V271.0M354.5 228.1V249.1M355.5 223.8V254.4M356.5 228.0V247.1M360.5 224.8V252.9M361.5 219.5V251.0M363.5 227.4V248.9M364.5 229.2V261.6M366.5 237.0V259.8M371.5 242.9V269.2M372.5 247.0V275.3M376.5 256.4V291.0M378.5 262.7V290.2M379.5 265.9V293.4M380.5 277.9V300.5M382.5 279.1V301.8M383.5 285.0V307.3M384.5 288.2V313.8M388.5 298.6V318.6M393.5 309.4V338.5M395.5 316.9V344.1M400.5 328.8V350.5M401.5 324.8V351.1M403.5 332.4V351.1M407.5 328.3V351.8M408.5 329.1V357.3M414.5 319.1V342.9M422.5 305.7V325.4M426.5 290.7V312.0M427.5 287.4V315.2M433.5 267.9V298.1M436.5 262.1V282.3M437.5 256.7V285.4M438.5 257.7V277.4M442.5 239.7V263.1M443.5 235.9V266.1M445.5 235.2V260.1M452.5 229.1V245.0M458.5 227.1V246.6M459.5 227.3V247.1M460.5 225.0V255.9M463.5 229.3V255.8M464.5 226.6V255.2M466.5 239.4V260.2M470.5 249.5V271.1M471.5 244.0V278.2M473.5 249.9V276.8M485.5 292.3V316.5M486.5 296.2V315.7M487.5 296.5V320.4M489.5 305.6V330.6M491.5 304.2V331.3M493.5 317.8V338.0M500.5 324.7V350.2M502.5 329.5V349.5M505.5 331.8V349.4M507.5 325.3V351.4M512.5 320.1V342.5M515.5 321.1V342.0M519.5 306.0V328.9M522.5 304.7V329.9M525.5 296.9V316.6M530.5 276.2V295.7M532.5 265.4V300.3M535.5 263.0V281.9M538.5 253.4V276.0M542.5 245.8V265.0M544.5 234.3V264.0M546.5 226.6V258.1M550.5 228.2V249.7M551.5 226.8V250.8M562.5 228.9V248.7M565.5 234.7V264.9M566.5 241.9V259.3M568.5 239.1V269.3M569.5 244.9V263.2M572.5 253.6V276.7M575.5 259.7V281.7M577.5 265.4V287.0M579.5 278.7V299.9M581.5 278.6V305.9M584.5 291.1V315.1M588.5 303.9V328.1M589.5 303.4V331.1M594.5 320.2V341.8M596.5 318.5V345.5M598.5 325.6V346.1M604.5 328.4V354.2M607.5 323.4V350.3M613.5 319.5V342.9M614.5 318.3V339.3M616.5 316.6V338.7M618.5 312.4V338.8M619.5 301.2V334.0M624.5 287.5V317.0M630.5 279.6V298.2M635.5 257.6V285.8M638.5 252.0V277.3M641.5 244.2V272.1M645.5 236.7V259.4M647.5 235.0V248.3M649.5 224.1V252.4M652.5 228.9V249.1M654.5 225.8V246.8M655.5 225.3V246.0M656.5 227.6V248.1M658.5 223.1V250.8M659.5 226.4V251.8M661.5 225.3V253.4M662.5 234.5V251.3M665.5 230.8V258.9M667.5 240.5V262.4M672.5 251.9V275.9M678.5 270.9V295.1M679.5 279.0V299.6M680.5 284.0V305.2M686.5 295.0V323.0M696.5 324.9V349.5M703.5 326.6V354.1M704.5 322.5V354.7M715.5 320.1V338.7M723.5 290.1V322.2M727.5 280.1V307.3M728.5 274.9V303.3M729.5 275.7V302.6M735.5 257.8V281.9M737.5 252.6V274.1M738.5 246.7V274.4M739.5 246.4V271.1M742.5 241.1V258.0M758.5 224.5V246.3M759.5 226.2V248.8M761.5 229.5V254.0M765.5 234.1V257.4M766.5 237.6V261.1M768.5 248.1V263.1M769.5 245.2V271.2M780.5 284.8V302.6M783.5 294.9V315.9M784.5 297.9V319.2" stroke="#12961a" stroke-width="0.6" fill="none"/>
<path d="M283.5 283.3V304.6M286.5 288.1V322.6M288.5 298.8V329.7M289.5 302.6V329.1M297.5 322.1V347.6M298.5 321.3V346.6M299.5 323.9V350.2M307.5 327.3V352.9M311.5 322.1V353.7M312.5 318.2V346.3M314.5 321.5V345.7M316.5 318.3V342.5M317.5 313.4V343.6M318.5 312.1V340.3M323.5 302.5V330.3M324.5 299.6V324.9M326.5 290.3V318.4M329.5 284.1V312.1M336.5 257.7V289.6M344.5 239.3V262.7M345.5 235.6V259.3M347.5 232.4V256.1M349.5 225.0V254.3M350.5 228.2V252.4M351.5 223.8V249.3M353.5 224.7V249.1M365.5 230.9V256.6M367.5 234.7V260.7M377.5 264.2V295.2M386.5 293.1V317.3M387.5 297.8V320.0M392.5 307.4V333.4M402.5 323.1V351.8M412.5 324.7V352.5M415.5 317.7V346.0M417.5 311.5V337.8M424.5 298.3V322.6M429.5 281.7V307.2M434.5 262.5V291.9M435.5 263.2V286.4M440.5 247.9V272.2M444.5 232.3V260.4M447.5 231.3V254.9M456.5 226.6V250.4M457.5 226.3V250.9M462.5 230.1V254.4M476.5 264.6V289.3M477.5 264.4V293.4M478.5 266.3V293.9M488.5 297.8V327.3M490.5 307.2V329.4M495.5 313.5V341.6M496.5 320.1V346.6M498.5 324.0V355.2M499.5 324.7V347.3M501.5 325.5V355.7M506.5 325.8V352.7M508.5 322.4V355.9M509.5 327.3V352.1M514.5 318.7V344.0M518.5 312.4V334.0M521.5 304.2V328.5M537.5 250.8V278.9M547.5 229.8V258.0M552.5 224.6V251.6M556.5 222.4V251.4M557.5 222.4V250.9M558.5 220.5V250.3M559.5 225.5V250.8M561.5 225.0V252.4M564.5 232.7V255.5M571.5 248.7V272.8M587.5 298.0V323.8M597.5 320.1V347.4M600.5 325.5V349.5M602.5 330.0V358.0M610.5 321.6V356.5M611.5 324.5V352.6M615.5 317.8V340.4M622.5 297.5V328.5M626.5 288.5V312.4M636.5 252.4V280.8M637.5 251.1V277.8M644.5 236.8V260.3M648.5 226.9V254.5M668.5 241.8V271.2M669.5 242.1V268.9M670.5 249.0V272.2M674.5 259.5V284.8M676.5 263.4V287.5M683.5 288.6V312.3M685.5 290.5V322.7M687.5 297.9V328.7M690.5 306.2V334.8M691.5 311.2V338.2M697.5 322.3V346.4M701.5 322.8V353.4M705.5 328.3V352.1M710.5 323.5V349.3M711.5 322.6V346.4M713.5 318.7V345.2M718.5 307.9V332.9M719.5 307.3V335.5M734.5 252.9V288.0M743.5 234.1V260.2M747.5 226.5V253.8M751.5 222.0V255.7M753.5 222.8V249.1M754.5 225.2V248.8M755.5 223.4V247.0M756.5 224.6V248.9M757.5 225.6V251.2M767.5 241.0V271.3M770.5 250.5V275.9M775.5 264.7V291.5M776.5 264.1V293.8M786.5 299.3V326.9" stroke="#38d238" stroke-width="0.6" fill="none"/>
<polyline points="281.0,480.0 283.5,510.0 286.0,548.0 289.0,553.0 293.0,542.0 297.0,545.0 300.0,540.0 302.5,525.0 304.5,460.0 307.0,437.0 309.5,450.0 311.5,520.0 314.0,538.0 317.0,543.0 320.0,546.0 323.0,548.0 326.0,540.0 329.0,551.0 332.0,538.0 335.0,545.0 338.0,541.0 342.0,545.0 346.0,542.0 350.0,544.0 354.0,538.0 356.0,528.0 358.5,523.0 361.0,535.0 363.5,548.0 367.0,541.0 371.0,539.0 375.0,540.0 379.0,545.0 383.0,548.3 386.6,537.6 390.4,536.6 393.7,538.0 396.6,552.9 400.5,542.8 403.4,544.9 407.0,551.0 411.0,537.1 414.3,556.1 418.4,542.6 421.3,542.2 424.8,534.9 428.0,538.5 431.5,548.8 434.8,540.5 438.9,545.8 441.8,543.0 445.4,542.5 449.4,540.7 452.7,535.5 457.1,545.1 461.0,532.0 464.3,541.4 467.2,548.3 471.1,547.1 474.8,535.0 477.9,536.1 481.0,540.2 485.5,538.8 488.5,554.8 492.6,546.9 495.9,543.4 499.1,536.6 502.4,546.9 505.7,546.6 509.2,547.0 513.6,537.0 517.4,546.8 521.8,546.3 525.8,553.0 530.4,542.8 534.8,545.5 539.3,545.0 543.6,554.6 547.5,544.0 551.4,553.7 555.7,546.4 559.6,556.3 563.7,554.3 567.0,546.0 571.4,549.3 575.4,549.3 579.4,558.3 583.4,549.7 587.9,531.0 591.2,548.3 595.6,550.0 598.7,547.9 602.2,546.6 606.5,555.4 609.4,551.9 613.2,551.0 616.2,551.0 619.5,553.0 623.1,546.9 627.6,552.8 630.7,548.2 633.8,554.4 637.6,546.7 641.8,554.4 645.9,551.5 650.3,558.6 654.6,549.4 657.7,553.4 661.8,555.0 666.4,561.2 670.8,551.9 674.4,548.1 677.3,555.5 680.4,553.8 683.5,549.2 687.5,560.0 690.5,556.8 694.6,558.5 698.4,556.3 702.8,561.2 706.5,554.4 710.2,558.0 714.0,553.1 717.7,539.0 721.2,548.6 724.9,562.2 729.3,555.2 733.2,556.6 736.0,560.7 739.4,557.0 743.5,557.0 746.7,563.5 750.2,557.3 754.2,555.7 758.1,561.4 762.3,557.1 766.8,567.8 769.8,562.5 772.8,562.1 775.8,557.4 779.0,555.5 782.0,568.4 786.0,561.8 787.0,565.0" stroke="#a89a28" stroke-width="2" fill="none" stroke-linejoin="round"/>
<polyline points="281.0,468.0 283.5,505.0 286.0,548.0 289.0,552.0 293.0,541.0 297.0,544.0 300.0,542.0 302.5,520.0 304.5,430.0 307.0,406.0 309.5,425.0 311.5,520.0 314.0,541.0 317.0,545.0 320.0,543.0 323.0,548.0 326.0,540.0 329.0,551.0 332.0,535.0 335.0,545.0 338.0,542.0 342.0,546.0 346.0,540.0 350.0,544.0 354.0,540.0 356.0,525.0 358.5,512.0 361.0,530.0 363.5,550.0 367.0,542.0 371.0,538.0 375.0,541.0 379.0,546.0 383.0,547.9 386.6,537.7 390.4,538.1 393.7,536.9 396.6,553.3 400.5,542.6 403.4,544.1 407.0,550.2 411.0,537.1 414.3,556.2 418.4,541.8 421.3,543.4 424.8,535.5 428.0,539.2 431.5,548.1 434.8,539.9 438.9,545.2 441.8,543.7 445.4,540.6 449.4,539.9 452.7,535.9 457.1,544.0 461.0,540.0 464.3,542.5 467.2,547.5 471.1,546.1 474.8,536.1 477.9,537.3 481.0,543.0 485.5,539.9 488.5,554.1 492.6,544.7 495.9,541.7 499.1,537.5 502.4,547.3 505.7,546.5 509.2,547.3 513.6,535.0 517.4,546.5 521.8,549.2 525.8,552.8 530.4,542.1 534.8,547.4 539.3,543.5 543.6,553.5 547.5,544.9 551.4,552.9 555.7,547.6 559.6,555.5 563.7,553.9 567.0,547.3 571.4,549.1 575.4,548.6 579.4,557.4 583.4,548.4 587.9,541.0 591.2,547.2 595.6,552.9 598.7,547.7 602.2,547.6 606.5,555.5 609.4,552.2 613.2,549.0 616.2,550.9 619.5,552.7 623.1,548.2 627.6,553.5 630.7,548.1 633.8,553.3 637.6,548.0 641.8,554.7 645.9,550.5 650.3,557.5 654.6,549.9 657.7,555.5 661.8,552.5 666.4,561.7 670.8,552.8 674.4,548.8 677.3,556.0 680.4,552.0 683.5,549.4 687.5,560.4 690.5,555.3 694.6,559.6 698.4,555.2 702.8,559.0 706.5,554.8 710.2,558.1 714.0,551.8 717.7,537.0 721.2,549.3 724.9,561.3 729.3,555.1 733.2,556.9 736.0,559.9 739.4,555.7 743.5,556.0 746.7,563.8 750.2,557.5 754.2,556.9 758.1,562.1 762.3,557.7 766.8,563.6 769.8,560.5 772.8,563.2 775.8,556.3 779.0,557.9 782.0,568.4 786.0,561.4 787.0,566.0" stroke="#2c8a22" stroke-width="2" fill="none" stroke-linejoin="round"/>
</g>
<path d="M382.5 148V606M585 148V606" stroke="#f0b878" stroke-width="1" stroke-dasharray="3 1" shape-rendering="crispEdges"/>
<path d="M382.4 176.5 l5 4.5 l-5 4.5 l-5 -4.5z" fill="#f5a818"/>
<path d="M584.6 166 l5 4.5 l-5 4.5 l-5 -4.5z" fill="#f5a818"/>
<rect x="326" y="164" width="43" height="32" fill="#000"/>
<rect x="316" y="252" width="56" height="37" fill="#000"/>
<rect x="594" y="261" width="56" height="37" fill="#000"/>
<path d="M281 278.5 L291 285 L281 291.5z" fill="#f59a12"/>
<path d="M526.5 147 L542 147 L534.2 156.5z" fill="#f5a818"/>
<path d="M787 323.5 L787 338.5 L778.5 331z" fill="#e2d23c"/>
<rect x="281.5" y="147.5" width="506" height="459" fill="none" stroke="#d9d9d9" stroke-width="1" shape-rendering="crispEdges"/>
</svg>
<div class="t" style="left:281.0px;top:127.0px;font-size:12px;line-height:12px;color:#dedede;transform:translateX(-50%) scaleX(0.9);transform-origin:50% 50%;">-250u</div>
<div class="t" style="left:281.0px;top:614.0px;font-size:12px;line-height:12px;color:#dedede;transform:translateX(-50%) scaleX(0.9);transform-origin:50% 50%;">0</div>
<div class="t" style="left:278.3px;top:141.0px;font-size:12px;line-height:12px;color:#e2e45c;transform:translateX(-100%) scaleX(0.9);transform-origin:100% 50%;">60m</div>
<div class="t" style="left:789px;top:141.0px;font-size:12px;line-height:12px;color:#9ea24c;transform:scaleX(0.9);transform-origin:0 50%;">80</div>
<div class="t" style="left:331.6px;top:127.0px;font-size:12px;line-height:12px;color:#dedede;transform:translateX(-50%) scaleX(0.9);transform-origin:50% 50%;">-200u</div>
<div class="t" style="left:331.6px;top:614.0px;font-size:12px;line-height:12px;color:#dedede;transform:translateX(-50%) scaleX(0.9);transform-origin:50% 50%;">20k</div>
<div class="t" style="left:278.3px;top:187.0px;font-size:12px;line-height:12px;color:#e2e45c;transform:translateX(-100%) scaleX(0.9);transform-origin:100% 50%;">40m</div>
<div class="t" style="left:789px;top:187.0px;font-size:12px;line-height:12px;color:#9ea24c;transform:scaleX(0.9);transform-origin:0 50%;">60</div>
<div class="t" style="left:382.2px;top:127.0px;font-size:12px;line-height:12px;color:#dedede;transform:translateX(-50%) scaleX(0.9);transform-origin:50% 50%;">-150u</div>
<div class="t" style="left:382.2px;top:614.0px;font-size:12px;line-height:12px;color:#dedede;transform:translateX(-50%) scaleX(0.9);transform-origin:50% 50%;">40k</div>
<div class="t" style="left:278.3px;top:233.0px;font-size:12px;line-height:12px;color:#e2e45c;transform:translateX(-100%) scaleX(0.9);transform-origin:100% 50%;">20m</div>
<div class="t" style="left:789px;top:233.0px;font-size:12px;line-height:12px;color:#9ea24c;transform:scaleX(0.9);transform-origin:0 50%;">40</div>
<div class="t" style="left:432.8px;top:127.0px;font-size:12px;line-height:12px;color:#dedede;transform:translateX(-50%) scaleX(0.9);transform-origin:50% 50%;">-100u</div>
<div class="t" style="left:432.8px;top:614.0px;font-size:12px;line-height:12px;color:#dedede;transform:translateX(-50%) scaleX(0.9);transform-origin:50% 50%;">60k</div>
<div class="t" style="left:278.3px;top:279.0px;font-size:12px;line-height:12px;color:#e2e45c;transform:translateX(-100%) scaleX(0.9);transform-origin:100% 50%;">0</div>
<div class="t" style="left:789px;top:279.0px;font-size:12px;line-height:12px;color:#9ea24c;transform:scaleX(0.9);transform-origin:0 50%;">20</div>
<div class="t" style="left:483.4px;top:127.0px;font-size:12px;line-height:12px;color:#dedede;transform:translateX(-50%) scaleX(0.9);transform-origin:50% 50%;">-50u</div>
<div class="t" style="left:483.4px;top:614.0px;font-size:12px;line-height:12px;color:#dedede;transform:translateX(-50%) scaleX(0.9);transform-origin:50% 50%;">80k</div>
<div class="t" style="left:278.3px;top:325.0px;font-size:12px;line-height:12px;color:#e2e45c;transform:translateX(-100%) scaleX(0.9);transform-origin:100% 50%;">-20m</div>
<div class="t" style="left:789px;top:325.0px;font-size:12px;line-height:12px;color:#9ea24c;transform:scaleX(0.9);transform-origin:0 50%;">0</div>
<div class="t" style="left:534.0px;top:127.0px;font-size:12px;line-height:12px;color:#dedede;transform:translateX(-50%) scaleX(0.9);transform-origin:50% 50%;">0</div>
<div class="t" style="left:534.0px;top:614.0px;font-size:12px;line-height:12px;color:#dedede;transform:translateX(-50%) scaleX(0.9);transform-origin:50% 50%;">100k</div>
<div class="t" style="left:278.3px;top:371.0px;font-size:12px;line-height:12px;color:#e2e45c;transform:translateX(-100%) scaleX(0.9);transform-origin:100% 50%;">-40m</div>
<div class="t" style="left:789px;top:371.0px;font-size:12px;line-height:12px;color:#9ea24c;transform:scaleX(0.9);transform-origin:0 50%;">-20</div>
<div class="t" style="left:584.6px;top:127.0px;font-size:12px;line-height:12px;color:#dedede;transform:translateX(-50%) scaleX(0.9);transform-origin:50% 50%;">50u</div>
<div class="t" style="left:584.6px;top:614.0px;font-size:12px;line-height:12px;color:#dedede;transform:translateX(-50%) scaleX(0.9);transform-origin:50% 50%;">120k</div>
<div class="t" style="left:278.3px;top:416.0px;font-size:12px;line-height:12px;color:#e2e45c;transform:translateX(-100%) scaleX(0.9);transform-origin:100% 50%;">-60m</div>
<div class="t" style="left:789px;top:416.0px;font-size:12px;line-height:12px;color:#9ea24c;transform:scaleX(0.9);transform-origin:0 50%;">-40</div>
<div class="t" style="left:635.2px;top:127.0px;font-size:12px;line-height:12px;color:#dedede;transform:translateX(-50%) scaleX(0.9);transform-origin:50% 50%;">100u</div>
<div class="t" style="left:635.2px;top:614.0px;font-size:12px;line-height:12px;color:#dedede;transform:translateX(-50%) scaleX(0.9);transform-origin:50% 50%;">140k</div>
<div class="t" style="left:278.3px;top:462.0px;font-size:12px;line-height:12px;color:#e2e45c;transform:translateX(-100%) scaleX(0.9);transform-origin:100% 50%;">-80m</div>
<div class="t" style="left:789px;top:462.0px;font-size:12px;line-height:12px;color:#9ea24c;transform:scaleX(0.9);transform-origin:0 50%;">-60</div>
<div class="t" style="left:685.8px;top:127.0px;font-size:12px;line-height:12px;color:#dedede;transform:translateX(-50%) scaleX(0.9);transform-origin:50% 50%;">150u</div>
<div class="t" style="left:685.8px;top:614.0px;font-size:12px;line-height:12px;color:#dedede;transform:translateX(-50%) scaleX(0.9);transform-origin:50% 50%;">160k</div>
<div class="t" style="left:278.3px;top:508.0px;font-size:12px;line-height:12px;color:#e2e45c;transform:translateX(-100%) scaleX(0.9);transform-origin:100% 50%;">-100m</div>
<div class="t" style="left:789px;top:508.0px;font-size:12px;line-height:12px;color:#9ea24c;transform:scaleX(0.9);transform-origin:0 50%;">-80</div>
<div class="t" style="left:736.4px;top:127.0px;font-size:12px;line-height:12px;color:#dedede;transform:translateX(-50%) scaleX(0.9);transform-origin:50% 50%;">200u</div>
<div class="t" style="left:736.4px;top:614.0px;font-size:12px;line-height:12px;color:#dedede;transform:translateX(-50%) scaleX(0.9);transform-origin:50% 50%;">180k</div>
<div class="t" style="left:278.3px;top:554.0px;font-size:12px;line-height:12px;color:#e2e45c;transform:translateX(-100%) scaleX(0.9);transform-origin:100% 50%;">-120m</div>
<div class="t" style="left:789px;top:554.0px;font-size:12px;line-height:12px;color:#9ea24c;transform:scaleX(0.9);transform-origin:0 50%;">-100</div>
<div class="t" style="left:787.0px;top:127.0px;font-size:12px;line-height:12px;color:#dedede;transform:translateX(-50%) scaleX(0.9);transform-origin:50% 50%;">250u</div>
<div class="t" style="left:787.0px;top:614.0px;font-size:12px;line-height:12px;color:#dedede;transform:translateX(-50%) scaleX(0.9);transform-origin:50% 50%;">200k</div>
<div class="t" style="left:278.3px;top:600.0px;font-size:12px;line-height:12px;color:#e2e45c;transform:translateX(-100%) scaleX(0.9);transform-origin:100% 50%;">-140m</div>
<div class="t" style="left:789px;top:600.0px;font-size:12px;line-height:12px;color:#9ea24c;transform:scaleX(0.9);transform-origin:0 50%;">-120</div>
<div class="t" style="left:534px;top:103.0px;font-size:12.7px;line-height:12.7px;color:#e8e8e8;transform:translateX(-50%) scaleX(1.0);transform-origin:50% 50%;">Time (s)</div>
<div class="t" style="left:534.4px;top:640.0px;font-size:12.9px;line-height:12.9px;color:#e8e8e8;transform:translateX(-50%) scaleX(1.0);transform-origin:50% 50%;">Frequency (Hz)</div>
<div class="t" style="left:227px;top:376px;font-size:12px;line-height:12px;color:#e2e45c;transform:translate(-50%,-50%) rotate(-90deg);">IN (V)</div>
<div class="t" style="left:828px;top:375.5px;font-size:12.6px;line-height:12.6px;color:#9ea24c;transform:translate(-50%,-50%) rotate(90deg);">FFT IN (dB)</div>
<div class="t" style="left:330.40px;top:169.0px;font-size:12px;line-height:12px;color:#dcdcdc;transform-origin:0 0;transform:scaleX(0.7794);">2</div>
<div class="t" style="left:330.40px;top:181.0px;font-size:12px;line-height:12px;color:#dcdcdc;transform-origin:0 0;transform:scaleX(0.8646);">-150 us</div>
<div class="t" style="left:594.60px;top:158.0px;font-size:12px;line-height:12px;color:#dcdcdc;transform-origin:0 0;transform:scaleX(0.4047);">1</div>
<div class="t" style="left:594.20px;top:170.0px;font-size:12px;line-height:12px;color:#dcdcdc;transform-origin:0 0;transform:scaleX(0.8333);">49.4 us</div>
<div class="t" style="left:319.00px;top:256.0px;font-size:12px;line-height:12px;color:#e4e468;transform-origin:0 0;transform:scaleX(0.9063);">5.65 mV</div>
<div class="t" style="left:319.00px;top:274.0px;font-size:12px;line-height:12px;color:#35a535;transform-origin:0 0;transform:scaleX(0.9247);">2.11 mV</div>
<div class="t" style="left:597.00px;top:265.0px;font-size:12px;line-height:12px;color:#e4e468;transform-origin:0 0;transform:scaleX(0.8951);">4.97 mV</div>
<div class="t" style="left:597.00px;top:284.0px;font-size:12px;line-height:12px;color:#35a535;transform-origin:0 0;transform:scaleX(0.8976);">-1.85 mV</div>
<div class="r" style="left:853px;top:75px;width:215px;height:592px;background:#f0f0f0;border-left:1px solid #fff;border-top:1px solid #fdfdfd;"></div>
<div class="t" style="left:858.60px;top:80.0px;font-size:11.5px;line-height:11.5px;color:#111;transform-origin:0 0;transform:scaleX(1.0064);font-weight:bold;">Cursor Control</div>
<svg width="1100" height="700" style="left:0;top:0;pointer-events:none">
<circle cx="1052" cy="89" r="10" fill="#1a76bb"/>
<circle cx="1052" cy="89" r="9" fill="#1b7cc4"/>
<path d="M1048.4 86.5 q0 -4.6 3.7 -4.6 q3.8 0 3.8 3.6 q0 2 -2 3.1 q-1.5 .9 -1.5 2.4" stroke="#fff" stroke-width="2.6" fill="none"/>
<rect x="1050.5" y="92.8" width="3" height="3" fill="#fff"/>
</svg>
<div class="t" style="left:899.80px;top:107.0px;font-size:14px;line-height:14px;color:#111;transform-origin:0 0;transform:scaleX(0.8479);font-weight:bold;">1</div>
<div class="t" style="left:960.40px;top:107.0px;font-size:14px;line-height:14px;color:#111;transform-origin:0 0;transform:scaleX(0.9378);font-weight:bold;">2</div>
<div class="t" style="left:1028.30px;top:108.0px;font-size:13px;line-height:13px;color:#111;transform-origin:0 0;transform:scaleX(1.0364);">Δ</div>
<div class="t" style="left:857.70px;top:133.0px;font-size:13px;line-height:13px;color:#111;transform-origin:0 0;transform:scaleX(0.8419);">X</div>
<div class="t" style="left:857.70px;top:157.0px;font-size:13px;line-height:13px;color:#111;transform-origin:0 0;transform:scaleX(0.7422);">Y1</div>
<div class="t" style="left:858.40px;top:183.0px;font-size:13px;line-height:13px;color:#111;transform-origin:0 0;transform:scaleX(0.7736);">Y2</div>
<div class="r" style="left:877px;top:130px;width:60px;height:19px;background:#f0f0f0;border:1px solid #fbfbfb;border-top-color:#a9a9a9;"></div>
<div class="t" style="left:880.00px;top:134.0px;font-size:12px;line-height:12px;color:#111;transform-origin:0 0;transform:scaleX(0.8765);">49.4 us</div>
<div class="r" style="left:941px;top:130px;width:60px;height:19px;background:#f0f0f0;border:1px solid #fbfbfb;border-top-color:#a9a9a9;"></div>
<div class="t" style="left:944.20px;top:134.0px;font-size:12px;line-height:12px;color:#111;transform-origin:0 0;transform:scaleX(0.8596);">-150 us</div>
<div class="r" style="left:1004px;top:130px;width:60px;height:19px;background:#f0f0f0;border:1px solid #fbfbfb;border-top-color:#a9a9a9;"></div>
<div class="t" style="left:1007.40px;top:134.0px;font-size:12px;line-height:12px;color:#111;transform-origin:0 0;transform:scaleX(0.8446);">-199 us</div>
<div class="r" style="left:877px;top:155px;width:60px;height:19px;background:#f0f000;border:1px solid #f8f8c8;border-top-color:#b4b44a;"></div>
<div class="t" style="left:880.00px;top:159.0px;font-size:12px;line-height:12px;color:#fbfbd2;transform-origin:0 0;transform:scaleX(0.8436);">4.97 mV</div>
<div class="r" style="left:941px;top:155px;width:60px;height:19px;background:#f0f000;border:1px solid #f8f8c8;border-top-color:#b4b44a;"></div>
<div class="t" style="left:943.60px;top:159.0px;font-size:12px;line-height:12px;color:#fbfbd2;transform-origin:0 0;transform:scaleX(0.8660);">5.65 mV</div>
<div class="r" style="left:1004px;top:155px;width:60px;height:19px;background:#f0f0f0;border:1px solid #fbfbfb;border-top-color:#a9a9a9;"></div>
<div class="t" style="left:1007.40px;top:159.0px;font-size:12px;line-height:12px;color:#111;transform-origin:0 0;transform:scaleX(0.8704);">684 uV</div>
<div class="r" style="left:877px;top:180px;width:60px;height:19px;background:#13a813;border:1px solid #f4faf4;border-top-color:#c8d8c8;"></div>
<div class="t" style="left:880.20px;top:184.0px;font-size:12px;line-height:12px;color:#e8fae8;transform-origin:0 0;transform:scaleX(0.8689);">-1.85 mV</div>
<div class="r" style="left:941px;top:180px;width:60px;height:19px;background:#13a813;border:1px solid #f4faf4;border-top-color:#c8d8c8;"></div>
<div class="t" style="left:943.70px;top:184.0px;font-size:12px;line-height:12px;color:#e8fae8;transform-origin:0 0;transform:scaleX(0.9018);">2.11 mV</div>
<div class="r" style="left:1004px;top:180px;width:60px;height:19px;background:#f0f0f0;border:1px solid #fbfbfb;border-top-color:#a9a9a9;"></div>
<div class="t" style="left:1007.40px;top:184.0px;font-size:12px;line-height:12px;color:#111;transform-origin:0 0;transform:scaleX(0.8638);">3.97 mV</div>
<div class="t" style="left:858.40px;top:210.0px;font-size:12.5px;line-height:12.5px;color:#111;transform-origin:0 0;transform:scaleX(1.0274);">ΔY1/ΔX</div>
<div class="t" style="left:858.40px;top:236.0px;font-size:12.5px;line-height:12.5px;color:#111;transform-origin:0 0;transform:scaleX(1.0274);">ΔY2/ΔX</div>
<div class="r" style="left:912px;top:206px;width:89px;height:19px;background:#f0f0f0;border:1px solid #fbfbfb;border-top-color:#a9a9a9;"></div>
<div class="t" style="left:915.00px;top:210.0px;font-size:12px;line-height:12px;color:#111;transform-origin:0 0;transform:scaleX(0.9100);">-3.43V/ s</div>
<div class="r" style="left:912px;top:232px;width:89px;height:19px;background:#f0f0f0;border:1px solid #fbfbfb;border-top-color:#a9a9a9;"></div>
<div class="t" style="left:915.00px;top:236.0px;font-size:12px;line-height:12px;color:#111;transform-origin:0 0;transform:scaleX(0.9100);">-19.9V/ s</div>
<div class="t" style="left:858.40px;top:260.0px;font-size:13px;line-height:13px;color:#111;transform-origin:0 0;transform:scaleX(0.9408);">#</div>
<div class="r" style="left:877px;top:257px;width:60px;height:21px;background:linear-gradient(#f3f3f3,#ececec 45%,#dedede 55%,#d2d2d2);border:1px solid #707070;border-radius:3px;box-shadow:inset 0 0 0 1px #fafafa;"></div>
<div class="t" style="left:881px;top:263.0px;font-size:11px;line-height:11px;color:#111;"></div>
<svg width="1100" height="700" style="left:0;top:0"><path d="M925.3 266.0 h7 l-3.5 4 z" fill="#000"/></svg>
<div class="r" style="left:941px;top:257px;width:60px;height:21px;background:linear-gradient(#f3f3f3,#ececec 45%,#dedede 55%,#d2d2d2);border:1px solid #707070;border-radius:3px;box-shadow:inset 0 0 0 1px #fafafa;"></div>
<div class="t" style="left:945px;top:263.0px;font-size:11px;line-height:11px;color:#111;"></div>
<svg width="1100" height="700" style="left:0;top:0"><path d="M989.4 266.0 h7 l-3.5 4 z" fill="#000"/></svg>
<div class="t" style="left:881.80px;top:261.0px;font-size:13px;line-height:13px;color:#111;transform-origin:0 0;transform:scaleX(0.6641);">1</div>
<div class="t" style="left:945.90px;top:261.0px;font-size:13px;line-height:13px;color:#111;transform-origin:0 0;transform:scaleX(0.6641);">1</div>
<div class="t" style="left:858.40px;top:285.0px;font-size:13px;line-height:13px;color:#111;transform-origin:0 0;transform:scaleX(0.7692);">ON</div>
<div class="r" style="left:899px;top:286px;width:13px;height:13px;background:#fff;border:1px solid #8e8f8f;"></div>
<div class="r" style="left:901px;top:288px;width:9px;height:9px;background:linear-gradient(135deg,#cbcfd5,#f6f6f6);border:1px solid #aeb3b9;"></div>
<svg width="1100" height="700" style="left:0;top:0">
<path d="M902.4 292.6 L904.9 295.8 L908.9 289" stroke="#3c4d7e" stroke-width="2.1" fill="none"/>
</svg>
<div class="r" style="left:965px;top:286px;width:13px;height:13px;background:#fff;border:1px solid #8e8f8f;"></div>
<div class="r" style="left:967px;top:288px;width:9px;height:9px;background:linear-gradient(135deg,#cbcfd5,#f6f6f6);border:1px solid #aeb3b9;"></div>
<svg width="1100" height="700" style="left:0;top:0">
<path d="M968.4 292.6 L970.9 295.8 L974.9 289" stroke="#3c4d7e" stroke-width="2.1" fill="none"/>
</svg>
<div class="r" style="left:853px;top:313px;width:215px;height:1px;background:#a0a0a0;"></div>
<div class="r" style="left:853px;top:314px;width:215px;height:1px;background:#fdfdfd;"></div>
<div class="r" style="left:857px;top:329px;width:13px;height:13px;background:#fff;border:1px solid #8e8f8f;"></div>
<div class="r" style="left:859px;top:331px;width:9px;height:9px;background:linear-gradient(135deg,#cbcfd5,#f6f6f6);border:1px solid #aeb3b9;"></div>
<svg width="1100" height="700" style="left:0;top:0">
<path d="M860.4 335.6 L862.9 338.8 L866.9 332" stroke="#3c4d7e" stroke-width="2.1" fill="none"/>
</svg>
<div class="t" style="left:876.60px;top:330.0px;font-size:12px;line-height:12px;color:#111;transform-origin:0 0;transform:scaleX(0.9034);">Snap To Data</div>
<div class="r" style="left:857px;top:352px;width:13px;height:13px;background:#fff;border:1px solid #8e8f8f;"></div>
<div class="r" style="left:859px;top:354px;width:9px;height:9px;background:linear-gradient(135deg,#cbcfd5,#f6f6f6);border:1px solid #aeb3b9;"></div>
<svg width="1100" height="700" style="left:0;top:0">
<path d="M860.4 358.6 L862.9 361.8 L866.9 355" stroke="#3c4d7e" stroke-width="2.1" fill="none"/>
</svg>
<div class="t" style="left:876.60px;top:353.0px;font-size:12px;line-height:12px;color:#111;transform-origin:0 0;transform:scaleX(0.8799);">Show Marker</div>
<div class="r" style="left:857px;top:375px;width:13px;height:13px;background:#fff;border:1px solid #8e8f8f;"></div>
<div class="r" style="left:859px;top:377px;width:9px;height:9px;background:linear-gradient(135deg,#cbcfd5,#f6f6f6);border:1px solid #aeb3b9;"></div>
<svg width="1100" height="700" style="left:0;top:0">
<path d="M860.4 381.6 L862.9 384.8 L866.9 378" stroke="#3c4d7e" stroke-width="2.1" fill="none"/>
</svg>
<div class="t" style="left:876.60px;top:376.0px;font-size:12px;line-height:12px;color:#111;transform-origin:0 0;transform:scaleX(0.8777);">Show Values</div>
<div class="r" style="left:857px;top:398px;width:13px;height:13px;background:#fff;border:1px solid #8e8f8f;"></div>
<div class="r" style="left:859px;top:400px;width:9px;height:9px;background:linear-gradient(135deg,#cbcfd5,#f6f6f6);border:1px solid #aeb3b9;"></div>
<div class="t" style="left:876.60px;top:399.0px;font-size:12px;line-height:12px;color:#111;transform-origin:0 0;transform:scaleX(0.8529);">Show Cross Hairs</div>
<div class="r" style="left:1068px;top:75px;width:22px;height:592px;background:#f0f0f0;"></div>
<div class="r" style="left:1068px;top:76px;width:20px;height:590px;border:1px solid #8c8e94;background:#f0f0f0;"></div>
<div class="r" style="left:1069px;top:125px;width:18px;height:67px;background:#fff;"></div>
<div class="t" style="left:1078.3px;top:101.3px;font-size:12px;line-height:12px;color:#1a1a1a;transform:translate(-50%,-50%) rotate(90deg) scaleX(0.878);">GRAPH</div>
<div class="t" style="left:1078.3px;top:159px;font-size:12px;line-height:12px;color:#1a1a1a;transform:translate(-50%,-50%) rotate(90deg) scaleX(0.9);">CURSORS</div>
<div class="t" style="left:1078.3px;top:225.2px;font-size:12px;line-height:12px;color:#1a1a1a;transform:translate(-50%,-50%) rotate(90deg) scaleX(0.882);">ANALYSIS</div>
<div class="r" style="left:1089px;top:75px;width:1px;height:593px;background:#8e9196;"></div>
<div class="r" style="left:8px;top:666px;width:1082px;height:2px;background:#fdfdfd;"></div>
<div class="r" style="left:8px;top:668px;width:1082px;height:1px;background:#9a9a9a;"></div>
<div class="r" style="left:8px;top:669px;width:1084px;height:1px;background:#fdfdfd;"></div>
<div class="r" style="left:8px;top:670px;width:1084px;height:1px;background:#9a9a9a;"></div>
<div class="r" style="left:8px;top:671px;width:1084px;height:21px;background:#f0eeec;"></div>
<div class="t" style="left:12.50px;top:676.0px;font-size:12px;line-height:12px;color:#111;transform-origin:0 0;transform:scaleX(0.9474);">Analog Devices M2k Rev.D (Z7010)</div>
<div class="t" style="left:201.60px;top:676.0px;font-size:12px;line-height:12px;color:#111;transform-origin:0 0;transform:scaleX(0.8890);">LB3031A</div>
<div class="t" style="left:252.60px;top:676.0px;font-size:12px;line-height:12px;color:#111;transform-origin:0 0;transform:scaleX(0.9799);">10A Current Probe</div>
<div class="t" style="left:356.80px;top:676.0px;font-size:12px;line-height:12px;color:#111;transform-origin:0 0;transform:scaleX(0.9619);">Vout=1.52V T=24.4C</div>
<div class="t" style="left:476.80px;top:676.0px;font-size:12px;line-height:12px;color:#111;transform-origin:0 0;transform:scaleX(0.9926);">Idle</div>
<div class="r" style="left:1088px;top:680px;width:2px;height:2px;background:#b8b8b8;"></div>
<div class="r" style="left:1084px;top:684px;width:2px;height:2px;background:#b8b8b8;"></div>
<div class="r" style="left:1088px;top:684px;width:2px;height:2px;background:#b8b8b8;"></div>
<div class="r" style="left:1080px;top:688px;width:2px;height:2px;background:#b8b8b8;"></div>
<div class="r" style="left:1084px;top:688px;width:2px;height:2px;background:#b8b8b8;"></div>
<div class="r" style="left:1088px;top:688px;width:2px;height:2px;background:#b8b8b8;"></div>
</body></html>
